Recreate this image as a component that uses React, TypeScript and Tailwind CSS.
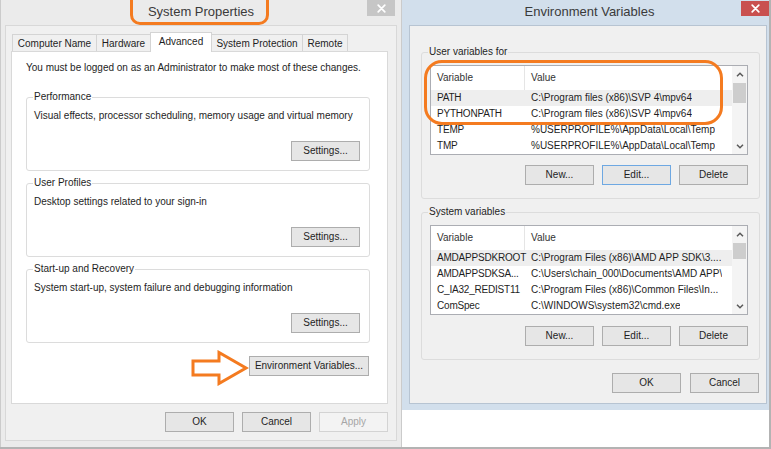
import React from "react";

type BtnProps = { label: string; className?: string; disabled?: boolean; focused?: boolean };

function Btn({ label, className = "", disabled, focused }: BtnProps) {
  const base = "h-[20px] flex items-center justify-center text-[10px] leading-[12px] shrink-0";
  const look = disabled
    ? "border border-[#d3d3d3] bg-[#f3f3f3] text-[#a6a6a6]"
    : focused
    ? "border border-[#6ea8e2] bg-[#e6e6e6] text-[#1e1e1e]"
    : "border border-[#adadad] bg-[#e6e6e6] text-[#1e1e1e]";
  return <div className={`${base} ${look} ${className}`}>{label}</div>;
}

function CloseX() {
  return (
    <svg width="9" height="9" viewBox="0 0 9 9">
      <path d="M1.2 1.2L7.8 7.8M7.8 1.2L1.2 7.8" stroke="white" strokeWidth="1.7" strokeLinecap="round" />
    </svg>
  );
}

function Chevron({ up }: { up?: boolean }) {
  return (
    <svg width="8" height="5" viewBox="0 0 8 5">
      <polyline
        points={up ? "1,4.2 4,1.2 7,4.2" : "1,0.8 4,3.8 7,0.8"}
        fill="none"
        stroke="#5a5a5a"
        strokeWidth="1.5"
      />
    </svg>
  );
}

type Row = { name: string; value: string; hl?: boolean };

function VarList({ rows, thumb }: { rows: Row[]; thumb: string }) {
  return (
    <div className="w-[318px] h-[90px] mt-[7px] border border-[#abadb3] bg-white flex overflow-hidden">
      <div className="flex-1 flex flex-col overflow-hidden">
        <div className="h-[24px] flex items-stretch shrink-0">
          <div className="w-[94px] pl-[6px] border-r border-[#e5e5e5] flex items-center text-[#333333]">Variable</div>
          <div className="pl-[6px] flex items-center text-[#333333]">Value</div>
        </div>
        {rows.map((r) => (
          <div
            key={r.name}
            className={`h-[16px] shrink-0 flex items-center whitespace-nowrap ${r.hl ? "bg-[#eeeeee]" : ""}`}
          >
            <div className="w-[94px] pl-[6px] shrink-0 tracking-[-0.2px]">{r.name}</div>
            <div className="pl-[6px] overflow-hidden">{r.value}</div>
          </div>
        ))}
      </div>
      <div className="w-[15px] h-full bg-[#f4f4f4] flex flex-col shrink-0">
        <div className="h-[16px] flex items-center justify-center shrink-0">
          <Chevron up />
        </div>
        <div className={`mt-[1px] mx-[1px] bg-[#cdcdcd] shrink-0 ${thumb}`} />
        <div className="flex-1" />
        <div className="h-[16px] flex items-center justify-center shrink-0">
          <Chevron />
        </div>
      </div>
    </div>
  );
}

function Tab({ label, className }: { label: string; className: string }) {
  return (
    <div
      className={`h-[18px] border border-b-0 border-[#d4d4d4] bg-[#f0f0f0] flex items-center justify-center whitespace-nowrap ${className}`}
    >
      {label}
    </div>
  );
}

function Group({ title, desc, className }: { title: string; desc: string; className: string }) {
  return (
    <fieldset className={`w-[344px] border border-[#dcdcdc] rounded-[3px] pl-[7px] pr-[9px] pb-[9px] ${className}`}>
      <legend className="-ml-[1px] px-[1px] leading-[12px]">{title}</legend>
      <div className="mt-[7px] leading-[12px]">{desc}</div>
      <div className="mt-[19px] flex justify-end">
        <Btn label="Settings..." className="w-[69px]" />
      </div>
    </fieldset>
  );
}

export default function App() {
  const userRows: Row[] = [
    { name: "PATH", value: "C:\\Program files (x86)\\SVP 4\\mpv64", hl: true },
    { name: "PYTHONPATH", value: "C:\\Program files (x86)\\SVP 4\\mpv64" },
    { name: "TEMP", value: "%USERPROFILE%\\AppData\\Local\\Temp" },
    { name: "TMP", value: "%USERPROFILE%\\AppData\\Local\\Temp" },
  ];
  const sysRows: Row[] = [
    { name: "AMDAPPSDKROOT", value: "C:\\Program Files (x86)\\AMD APP SDK\\3....", hl: true },
    { name: "AMDAPPSDKSA...", value: "C:\\Users\\chain_000\\Documents\\AMD APP\\" },
    { name: "C_IA32_REDIST11", value: "C:\\Program Files (x86)\\Common Files\\In..." },
    { name: "ComSpec", value: "C:\\WINDOWS\\system32\\cmd.exe" },
  ];

  return (
    <div className="relative w-[771px] h-[449px] bg-white border-r-2 border-b-2 border-[#b3b3b3] flex items-start overflow-hidden font-['Liberation_Sans',Arial,sans-serif] text-[10px] leading-[12px] text-[#1e1e1e]">
      {/* System Properties window */}
      <div className="w-[402px] h-[447px] bg-[#ebebeb] border-x border-[#cbcbcb] flex flex-col px-[4px] pb-[6px] shrink-0">
        <div className="h-[25px] grid grid-cols-[1fr_auto_1fr] shrink-0">
          <div />
          <div className="pt-[4px] text-[13px] leading-[16px] text-[#3a3a3a]">System Properties</div>
          <div className="flex justify-end pr-[2px]">
            <div className="w-[28px] h-[16px] bg-[#c6c6c6] flex items-center justify-center">
              <CloseX />
            </div>
          </div>
        </div>
        <div className="flex-1 bg-[#f0f0f0] border border-[#d8d8d8] pt-[6px] flex flex-col">
          <div className="h-[20px] flex items-end pl-[6px] shrink-0">
            <Tab label="Computer Name" className="w-[85px]" />
            <Tab label="Hardware" className="w-[55px] -ml-[1px]" />
            <div className="relative z-10 w-[62px] h-[20px] -ml-[1px] border border-b-0 border-[#d4d4d4] bg-white flex items-start justify-center pt-[3px]">
              Advanced
            </div>
            <Tab label="System Protection" className="w-[92px] -ml-[1px]" />
            <Tab label="Remote" className="w-[46px] -ml-[1px]" />
          </div>
          <div className="w-[377px] h-[353px] ml-[5px] -mt-[1px] bg-white border border-[#d9d9d9] pt-[10px] pl-[14px] shrink-0">
            <div className="leading-[12px] whitespace-nowrap">
              You must be logged on as an Administrator to make most of these changes.
            </div>
            <Group
              title="Performance"
              desc="Visual effects, processor scheduling, memory usage and virtual memory"
              className="mt-[17px]"
            />
            <Group title="User Profiles" desc="Desktop settings related to your sign-in" className="mt-[6px]" />
            <Group
              title="Start-up and Recovery"
              desc="System start-up, system failure and debugging information"
              className="mt-[6px]"
            />
            <div className="w-[343px] mt-[13px] flex justify-end">
              <Btn label="Environment Variables..." className="w-[120px]" />
            </div>
          </div>
          <div className="w-[377px] ml-[5px] mt-[8px] flex justify-end gap-[8px]">
            <Btn label="OK" className="w-[69px]" />
            <Btn label="Cancel" className="w-[69px]" />
            <Btn label="Apply" className="w-[69px]" disabled />
          </div>
        </div>
      </div>

      {/* Environment Variables window */}
      <div className="w-[367px] h-[410px] bg-[#d2dfec] flex flex-col shrink-0">
        <div className="h-[25px] grid grid-cols-[1fr_auto_1fr] shrink-0">
          <div />
          <div className="pt-[4px] pl-[8px] text-[13px] leading-[16px] text-[#3a3a3a]">Environment Variables</div>
          <div className="flex justify-end">
            <div className="mt-[1px] w-[28px] h-[15px] bg-[#c9504f] flex items-center justify-center">
              <CloseX />
            </div>
          </div>
        </div>
        <div className="ml-[7px] mr-[2px] h-[379px] bg-[#f0f0f0] border border-[#b7c4d2] pt-[20px] pl-[11px] shrink-0">
          <fieldset className="w-[339px] border border-[#dcdcdc] rounded-[3px] px-[8px] pb-[13px]">
            <legend className="-ml-[2px] px-[1px] leading-[12px]">User variables for</legend>
            <VarList rows={userRows} thumb="h-[20px]" />
            <div className="w-[318px] mt-[10px] flex justify-end gap-[8px]">
              <Btn label="New..." className="w-[69px]" />
              <Btn label="Edit..." className="w-[69px]" focused />
              <Btn label="Delete" className="w-[69px]" />
            </div>
          </fieldset>
          <fieldset className="mt-[7px] w-[339px] border border-[#dcdcdc] rounded-[3px] px-[8px] pb-[13px]">
            <legend className="-ml-[2px] px-[1px] leading-[12px]">System variables</legend>
            <VarList rows={sysRows} thumb="h-[16px]" />
            <div className="w-[318px] mt-[11px] flex justify-end gap-[8px]">
              <Btn label="New..." className="w-[69px]" />
              <Btn label="Edit..." className="w-[69px]" />
              <Btn label="Delete" className="w-[69px]" />
            </div>
          </fieldset>
          <div className="w-[339px] mt-[13px] pr-[1px] flex justify-end gap-[9px]">
            <Btn label="OK" className="w-[69px]" />
            <Btn label="Cancel" className="w-[69px]" />
          </div>
        </div>
      </div>

      {/* Orange annotations */}
      <div className="absolute left-[130px] -top-[12px] w-[139px] h-[37px] border-[3px] border-[#f47b20] rounded-[10px] pointer-events-none" />
      <div className="absolute left-[424px] top-[60px] w-[299px] h-[65px] border-[3px] border-[#f47b20] rounded-[18px] pointer-events-none" />
      <svg className="absolute left-[190px] top-[350px] pointer-events-none" width="60" height="36" viewBox="0 0 60 36">
        <polygon
          points="3,11 29,11 29,2.5 56,18 29,33.5 29,25 3,25"
          fill="none"
          stroke="#f47b20"
          strokeWidth="3"
          strokeLinejoin="miter"
        />
      </svg>
    </div>
  );
}
